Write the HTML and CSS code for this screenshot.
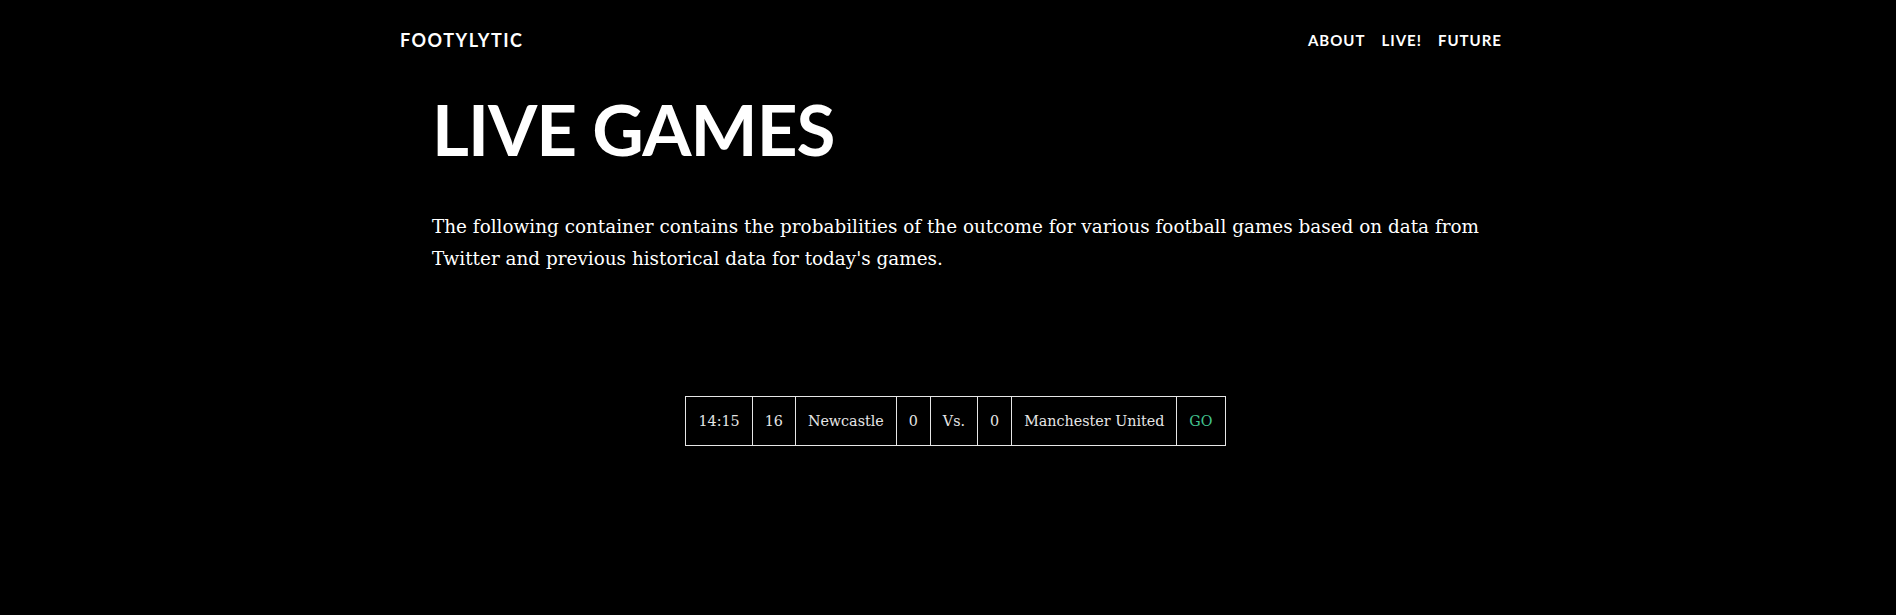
FILE: index.html
```html
<!DOCTYPE html>
<html lang="en">
<head>
<meta charset="utf-8">
<title>Footylytic - Live Games</title>
<link rel="stylesheet" href="styles.css">
</head>
<body>
<header class="navbar">
  <div class="container nav-inner">
    <a class="brand" href="#">Footylytic</a>
    <nav class="nav-links">
      <a href="#">About</a>
      <a href="#">Live!</a>
      <a href="#">Future</a>
    </nav>
  </div>
</header>
<main class="container">
  <section class="intro">
    <h1 class="title">Live Games</h1>
    <p class="lead">The following container contains the probabilities of the outcome for various football games based on data from Twitter and previous historical data for today's games.</p>
    <div class="games">
      <table class="game-table">
        <tr>
          <td>14:15</td>
          <td>16</td>
          <td>Newcastle</td>
          <td>0</td>
          <td>Vs.</td>
          <td>0</td>
          <td>Manchester United</td>
          <td class="go">GO</td>
        </tr>
      </table>
    </div>
  </section>
</main>
</body>
</html>
```
FILE: styles.css
```css
html, body {
  margin: 0;
  background: #000;
  color: #fff;
  font-family: "DejaVu Serif", serif;
}

.container {
  width: 1170px;
  margin: 0 auto;
  box-sizing: border-box;
}

.nav-inner {
  display: flex;
  justify-content: space-between;
  align-items: center;
  height: 80px;
  padding: 0 31px 0 37px;
}

.brand {
  font-family: Lato, sans-serif;
  font-weight: 700;
  font-size: 18px;
  letter-spacing: 1.5px;
  text-transform: uppercase;
  color: #fff;
  text-decoration: none;
}

.nav-links {
  display: flex;
  gap: 16px;
}

.nav-links a {
  font-family: Lato, sans-serif;
  font-weight: 700;
  font-size: 15px;
  letter-spacing: 1px;
  text-transform: uppercase;
  color: #fff;
  text-decoration: none;
}

.intro {
  padding: 0 36px 0 69px;
}

.title {
  margin: 13px 0 0;
  font-family: Lato, sans-serif;
  font-weight: 700;
  font-size: 71px;
  line-height: 72px;
  letter-spacing: -1px;
  text-transform: uppercase;
}

.lead {
  margin: 46px 0 0;
  font-size: 18.4px;
  line-height: 32px;
}

.games {
  display: flex;
  justify-content: center;
  margin-top: 121px;
  padding-right: 18px;
}

.game-table {
  border-collapse: collapse;
  font-size: 14.3px;
  line-height: 24px;
  color: #e6e6e6;
}

.game-table td {
  border: 1px solid #e6e6e6;
  padding: 12px 12px;
  text-align: center;
  white-space: nowrap;
}

.game-table .go {
  color: #42c28f;
}
```
